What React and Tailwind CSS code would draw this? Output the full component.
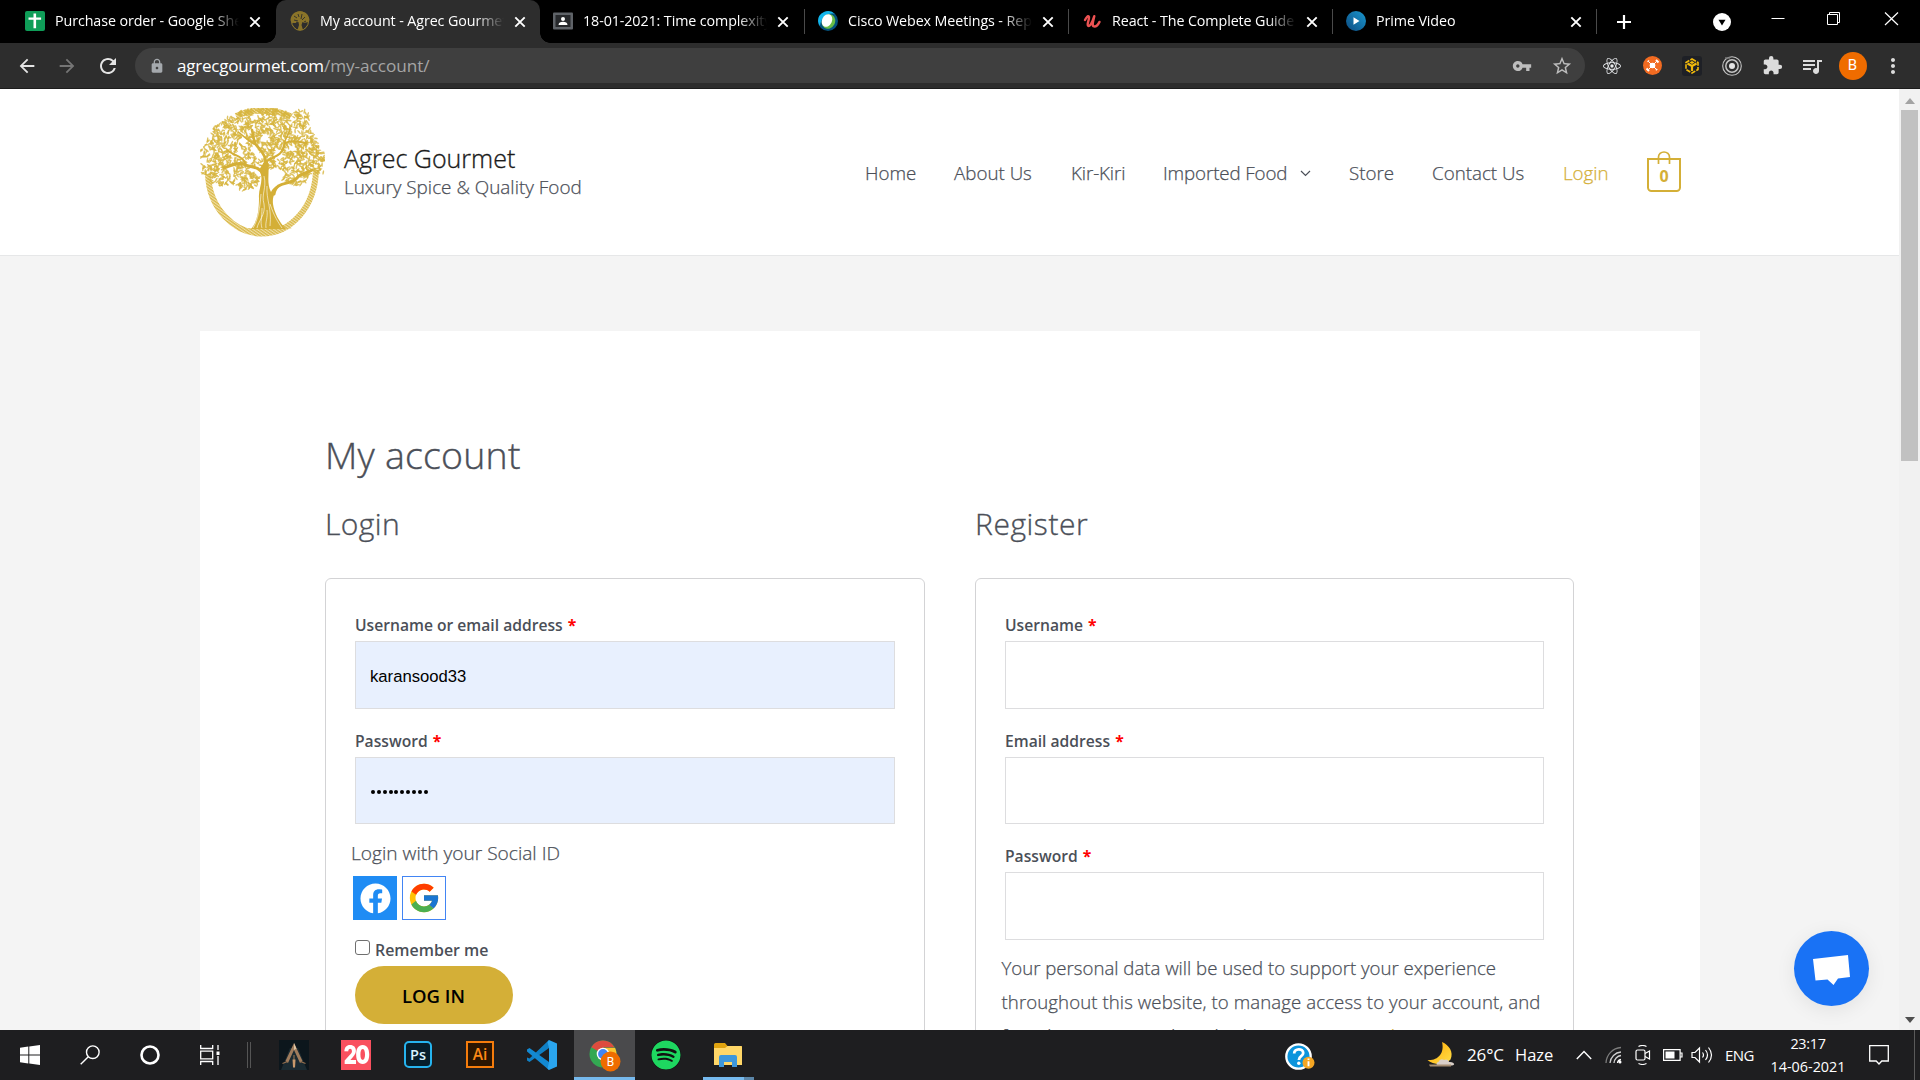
import {
  MdVpnKey, MdStarBorder, MdExtension, MdQueueMusic, MdLock, MdRefresh,
  MdArrowBack, MdArrowForward, MdMoreVert,
} from "react-icons/md";
import { FaSpotify, FaFacebook } from "react-icons/fa";
import { FcGoogle } from "react-icons/fc";
import { SiReact } from "react-icons/si";

/* ---------- Olive tree logo ---------- */

function makeLeaves() {
  let seed = 11;
  const rnd = () => {
    seed = (seed * 16807) % 2147483647;
    return seed / 2147483647;
  };
  const holes = [
    [58, 62, 5], [76, 67, 7], [40, 46, 5], [44, 34, 3.5], [66, 30, 4],
    [78, 46, 5], [54, 42, 4], [92, 40, 3.5], [30, 60, 3], [60, 48, 4],
  ];
  const leaves = [];
  const inside = (x, y) => {
    if (holes.some(([a, b, r]) => Math.hypot(x - a, y - b) < r)) return false;
    const dx = (x - 62) / 58;
    const dy = (y - 46) / 46;
    if (y <= 62 && dx * dx + dy * dy < 1) return true;
    if (y > 42 && y < 66 && (x < 22 || x > 100) && x > 1 && x < 124) return true;
    if (Math.hypot((x - 45) / 14, (y - 70) / 12) < 1) return true;
    if (Math.hypot((x - 23) / 15, (y - 67) / 11) < 1) return true;
    if (Math.hypot((x - 96) / 14, (y - 68) / 9) < 1) return true;
    if (Math.hypot((x - 100) / 9, (y - 11) / 10) < 1) return true;
    return false;
  };
  for (let i = 0; i < 1900; i++) {
    const x = rnd() * 123 + 1;
    const y = rnd() * 82 + 1;
    const a = rnd() * 180;
    const l = 1.7 + rnd() * 1.3;
    if (inside(x, y)) leaves.push([x, y, a, l]);
  }
  return leaves;
}
const LEAVES = makeLeaves();

function TreeLogo() {
  return (
    <svg viewBox="0 0 125 129" className="h-[129px] w-[125px] shrink-0">
      <defs>
        <pattern id="hatch" width="2.4" height="2.4" patternUnits="userSpaceOnUse" patternTransform="rotate(35)">
          <rect width="2.4" height="2.4" fill="#f0dfa6" />
          <rect width="2.4" height="1.3" fill="#d9b848" />
        </pattern>
      </defs>
      <path d="M8 66 C9 100 34 125.500 62 125.500 C90 125.500 115 100 116 62" fill="none" stroke="url(#hatch)" strokeWidth="6" />
      <path d="M36 8 C52 0.500 74 0.500 90 8" fill="none" stroke="url(#hatch)" strokeWidth="6" />
      <path d="M40 119 Q62 123 86 119 L92 120 Q62 130 34 120 Z" fill="url(#hatch)" />
      {LEAVES.map(([x, y, a, l], i) => (
        <ellipse key={i} cx={x} cy={y} rx={l} ry="0.8" fill="#d7b53f" opacity="0.8" transform={`rotate(${a} ${x} ${y})`} />
      ))}
      <g fill="none" stroke="#d4af37" strokeLinecap="round">
        <path d="M63 66 C58 57 50 60 43 56 C36 54 30 58 24 60" strokeWidth="3" />
        <path d="M46 57 C44 48 34 48 27 42" strokeWidth="2" />
        <path d="M66 62 C68 48 60 42 57 38 C53 34 54 28 52 22" strokeWidth="2.600" />
        <path d="M67 53 C74 48 82 48 84 38 C84 33 94 32 106 35" strokeWidth="2.200" />
        <path d="M84 38 C84 30 91 26 90 18" strokeWidth="1.500" />
        <path d="M74 86 C76 72 90 78 97 70 C100 65 106 66 112 62" strokeWidth="3" />
        <path d="M56 37 C46 32 42 26 38 24" strokeWidth="1.500" />
      </g>
      <path d="M59 62 C65 72 58 80 59 90 C59 104 57 114 51 121 L86 121 C79 114 74 104 73 96 C72 88 76 82 80 77 C74 78 72 82 71 84 C66 74 70 64 68 54 L64 54 Z" fill="#d4af37" />
      <g fill="none" stroke="#fff" strokeOpacity="0.65" strokeWidth="0.900">
        <path d="M64 68 C67 80 61 86 64 96 C66 106 58 114 57 120" />
        <path d="M67 78 C66 92 72 100 70 118" />
        <path d="M62 100 C62 110 60 114 62 120" />
        <path d="M70 96 C74 108 78 114 82 120" />
        <path d="M61 86 C60 100 58 112 53 120" />
        <path d="M67 102 C68 110 65 114 66 120" />
      </g>
    </svg>
  );
}

/* ---------- Browser chrome ---------- */

function SheetsIcon() {
  return (
    <svg viewBox="0 0 20 20" className="size-5">
      <rect width="20" height="20" rx="2" fill="#0f9d58" />
      <path d="M8.500 2.500h2.600v4h5v2.300h-5v8.500H8.500V8.800H3.500V6.500h5z" fill="#fff" />
    </svg>
  );
}
function TreeFavicon() {
  return (
    <svg viewBox="0 0 20 20" className="size-5">
      <ellipse cx="10" cy="10" rx="8.500" ry="9.300" fill="none" stroke="#97802c" strokeWidth="1" />
      <path d="M0.500 9C1 3 5 0.500 10 0.500S19 3 19.500 9c-1 3-3 2-5 3l-2-1-1 3 1.500 5H7.500L9 14l-.5-3-3 1C3 12 1 12 .5 9z" fill="#8a7429" />
      <path d="M4 5l3 2M12 3l-1 5M15 6l-3 3M4 9l4 1M8 3l1 3M16 10l-2 1M6 11l2 1" stroke="#2d2d2d" strokeWidth=".9" />
    </svg>
  );
}
function ClassroomIcon() {
  return (
    <svg viewBox="0 0 20 20" className="size-5">
      <rect width="20" height="17" y="1.500" rx="1" fill="#5f6368" />
      <rect x="2.500" y="4" width="15" height="12" fill="#26282b" />
      <circle cx="10" cy="8" r="2" fill="#fff" />
      <path d="M5.500 14c0-2.200 2-3.300 4.500-3.300s4.500 1.100 4.500 3.300z" fill="#fff" />
    </svg>
  );
}
function WebexIcon() {
  return (
    <svg viewBox="0 0 20 20" className="size-5">
      <circle cx="10" cy="10" r="10" fill="#04517c" />
      <path d="M0 10A10 10 0 0 1 17 3C10 1 3 6 2 15A10 10 0 0 1 0 10z" fill="#12b5ea" />
      <ellipse cx="10.500" cy="10.500" rx="6.500" ry="7.500" fill="#69bd45" transform="rotate(30 10.500 10.500)" />
      <ellipse cx="9" cy="9.500" rx="5" ry="6.600" fill="#fff" transform="rotate(25 9 9.500)" />
    </svg>
  );
}
function UdemyIcon() {
  return (
    <svg viewBox="0 0 20 20" className="size-5">
      <path d="M3 9C4.500 6 6 4.500 6.800 5.500c1.300 1.500-2.300 7.500-.8 9.200 1.700 1.500 4.300-3 6.300-9.500-1.300 5.500-2.600 9.800-.3 10.200 2 .3 4-1.500 5.500-4.500" fill="none" stroke="#ec5252" strokeWidth="2.400" strokeLinecap="round" strokeLinejoin="round" />
    </svg>
  );
}
function PrimeIcon() {
  return (
    <svg viewBox="0 0 20 20" className="size-5">
      <defs>
        <linearGradient id="prime" x1="1" y1="0" x2="0" y2="1">
          <stop offset="0" stopColor="#1a98cf" />
          <stop offset="1" stopColor="#0c4a80" />
        </linearGradient>
      </defs>
      <circle cx="10" cy="10" r="10" fill="url(#prime)" />
      <path d="M7.500 6.300l6 3.700-6 3.700z" fill="#fff" />
    </svg>
  );
}

function CloseX() {
  return (
    <svg viewBox="0 0 12 12" className="size-3 shrink-0">
      <path d="M1.300 1.300l9.400 9.400M10.700 1.300l-9.400 9.400" stroke="#fff" strokeWidth="1.900" />
    </svg>
  );
}

const TABS = [
  { title: "Purchase order - Google Sheets", icon: SheetsIcon },
  { title: "My account - Agrec Gourmet", icon: TreeFavicon, active: true },
  { title: "18-01-2021: Time complexity", icon: ClassroomIcon },
  { title: "Cisco Webex Meetings - Report", icon: WebexIcon, line: true },
  { title: "React - The Complete Guide", icon: UdemyIcon, line: true },
  { title: "Prime Video", icon: PrimeIcon, line: true },
];

function Tab({ title, icon: Icon, active, line }) {
  return (
    <div
      className={
        "relative flex h-[43px] w-[264px] shrink-0 items-center " +
        (active ? "rounded-t-[10px] bg-[#2d2d2d] pl-[14px]" : line ? "pl-[14px]" : "pl-[13px]") +
        (line ? " before:absolute before:left-0 before:top-[9px] before:h-[25px] before:w-px before:bg-[#4a4a4a]" : "")
      }
    >
      {active && (
        <>
          <span className="absolute bottom-0 -left-[10px] size-[10px] bg-[radial-gradient(circle_at_0_0,transparent_9.500px,#2d2d2d_10px)]" />
          <span className="absolute bottom-0 -right-[10px] size-[10px] bg-[radial-gradient(circle_at_100%_0,transparent_9.500px,#2d2d2d_10px)]" />
        </>
      )}
      <span className="mb-px shrink-0"><Icon /></span>
      <span className="ml-[10px] w-[185px] overflow-hidden whitespace-nowrap pb-[2px] text-[14.300px] tracking-[-0.100px] text-white [mask-image:linear-gradient(90deg,#000_155px,transparent_184px)]">
        {title}
      </span>
      <span className="ml-[9px] flex"><CloseX /></span>
    </div>
  );
}

function TabStrip() {
  return (
    <div className="flex h-[43px] bg-black pl-[12px]">
      {TABS.map((t) => <Tab key={t.title} {...t} />)}
      <div className="flex h-[43px] w-[55px] items-center justify-center before:mr-auto before:h-[25px] before:w-px before:bg-[#4a4a4a]">
        <svg viewBox="0 0 16 16" className="mr-auto size-4"><path d="M8 1v14M1 8h14" stroke="#fff" strokeWidth="2.200" /></svg>
      </div>
      <div className="ml-[62px] flex h-[43px] items-center">
        <svg viewBox="0 0 18 18" className="size-[18px]"><circle cx="9" cy="9" r="9" fill="#fff" /><path d="M5.500 6.700h7L9 12.500z" fill="#000" /></svg>
      </div>
      <svg viewBox="0 0 160 43" className="ml-[29px] h-[43px] w-[160px]" fill="none" stroke="#fff">
        <path d="M11.500 18.500h13" />
        <path d="M67.500 14.500h10v10h-10zM69.500 14.500v-2h10v10h-2" />
        <path d="M125 12.500l13 12.500M138 12.500l-13 12.500" strokeWidth="1.200" />
      </svg>
    </div>
  );
}

function Extensions() {
  return (
    <div className="flex items-center">
      <span className="flex w-[40px] justify-center"><SiReact className="size-[18px] text-[#e8eaed]" /></span>
      <span className="flex w-[40px] justify-center">
        <svg viewBox="0 0 19 19" className="size-[19px]">
          <circle cx="9.500" cy="9.500" r="9.500" fill="#f26b21" />
          <circle cx="9.500" cy="9.500" r="2.800" fill="#fff" />
          <path d="M9.500 9.500L5.500 5.500M9.500 9.500l4-4M9.500 9.500l-4 4M9.500 9.500l4 4" stroke="#fff" strokeWidth="1" />
          <path d="M13 4l2.500 2.500M3.500 12.500l2.500 2.500" stroke="#fff" strokeWidth="2" />
          <path d="M4.500 5.800l1.600-1.300M12.800 14.300l1.500-1.200" stroke="#fff" strokeWidth="1.300" />
        </svg>
      </span>
      <span className="flex w-[40px] justify-center">
        <svg viewBox="0 0 20 20" className="size-5">
          <rect width="20" height="20" rx="3" fill="#1e2026" />
          <path d="M10 3l6 3.500v7L10 17l-6-3.500v-7z" fill="none" stroke="#f0b90b" strokeWidth="1.600" strokeDasharray="4.500 1.200" />
          <path d="M10 10L5.500 7.500M10 10l4.500-2.500M10 10v5" stroke="#f0b90b" strokeWidth="2.200" />
          <path d="M7.500 6.500L10 5l2.500 1.500L10 8z" fill="#f0b90b" />
        </svg>
      </span>
      <span className="flex w-[40px] justify-center">
        <svg viewBox="0 0 20 20" className="size-5" fill="none" stroke="#c4c4c4">
          <circle cx="10" cy="10" r="9.300" strokeWidth="1.100" />
          <circle cx="10" cy="10" r="6.200" strokeWidth="1.500" />
          <circle cx="10" cy="10" r="3" fill="#e4e4e4" stroke="none" />
          <path d="M3 2l5 0" strokeWidth="1.500" stroke="#777" />
        </svg>
      </span>
      <span className="flex w-[40px] justify-center"><MdExtension className="size-[21px] text-[#dcdcdc]" /></span>
      <span className="flex w-[40px] justify-center"><MdQueueMusic className="size-6 text-[#dcdcdc]" /></span>
      <span className="flex w-[41px] justify-center">
        <span className="flex size-7 items-center justify-center rounded-full bg-[#ef6c00] font-[Roboto,sans-serif] text-[15px] text-white">B</span>
      </span>
      <span className="flex w-[39px] justify-center"><MdMoreVert className="size-6 text-[#dcdcdc]" /></span>
    </div>
  );
}

function Toolbar() {
  return (
    <div className="flex h-[46px] items-center border-b border-[#1c1c1c] bg-[#2d2d2d] pl-[16px]">
      <MdArrowBack className="size-[22px] text-[#e4e4e4]" />
      <MdArrowForward className="ml-[18px] size-[22px] text-[#757575]" />
      <MdRefresh className="ml-[18px] size-6 text-[#e4e4e4]" />
      <div className="ml-[15px] flex h-[35px] w-[1450px] items-center rounded-full bg-[#3f3f3f] pl-[14px] pr-[12px]">
        <MdLock className="size-[16px] text-[#a5a9ad]" />
        <span className="ml-[12px] text-[17px] tracking-[-0.200px] text-white">agrecgourmet.com</span>
        <span className="text-[17.200px] tracking-[-0.050px] text-[#a5a5a5]">/my-account/</span>
        <MdVpnKey className="ml-auto size-[20px] text-[#bdbdbd]" />
        <MdStarBorder className="ml-[19px] size-[22px] text-[#bdbdbd]" />
      </div>
      <div className="ml-[7px]"><Extensions /></div>
    </div>
  );
}

/* ---------- Site ---------- */

function SiteHeader() {
  return (
    <header className="flex h-[167px] items-center border-b border-[#e6e7e8] bg-white pl-[200px]">
      <TreeLogo />
      <div className="ml-[19px] w-[300px]">
        <div className="text-[25px] font-light leading-[30px] text-[#1a1a1a] [-webkit-text-stroke:0.350px]">Agrec Gourmet</div>
        <div className="text-[18.900px] font-light leading-[28px] text-[#4b4f58] [-webkit-text-stroke:0.250px]">Luxury Spice &amp; Quality Food</div>
      </div>
      <nav className="ml-[221px] flex items-center gap-[38px] whitespace-nowrap text-[18.750px] font-light leading-[34px] text-[#4b4f58] [-webkit-text-stroke:0.250px]">
        <span className="w-[51px] pt-[2px]">Home</span>
        <span className="w-[79px] pt-[2px]">About Us</span>
        <span className="w-[54px] pt-[2px] tracking-[-0.100px]">Kir-Kiri</span>
        <span className="flex w-[148px] items-center justify-between pt-[2px] tracking-[-0.120px]">
          Imported Food
          <svg viewBox="0 0 11 7" className="h-[7px] w-[11px]"><path d="M1 1l4.500 4.500L10 1" fill="none" stroke="#4b4f58" strokeWidth="1.200" /></svg>
        </span>
        <span className="w-[45px] pt-[2px]">Store</span>
        <span className="w-[93px] pt-[2px]">Contact Us</span>
        <span className="w-[46px] pt-[2px] text-[#d4af37]">Login</span>
        <span className="relative mb-[2px] flex h-[41px] w-[34px] items-end">
          <svg viewBox="0 0 34 41" className="absolute inset-0 h-[41px] w-[34px]" fill="none" stroke="#d4af37" strokeWidth="2">
            <path d="M1 8h32v28.500a3.500 3.500 0 0 1-3.500 3.500h-25A3.500 3.500 0 0 1 1 36.500z" />
            <path d="M11.500 13V6a5.500 5 0 0 1 11 0v7" strokeWidth="1.700" />
          </svg>
          <span className="w-full text-center text-[16px] font-bold leading-[32px] text-[#d4af37] [-webkit-text-stroke:0]">0</span>
        </span>
      </nav>
    </header>
  );
}

function Field({ label, className, children }) {
  return (
    <div className="pb-[19px]">
      <div className="text-[15.650px] font-semibold leading-[26px] text-[#4b4f58]">
        {label} <span className="ml-px font-bold text-[#ff0000]">*</span>
      </div>
      <div className={"mt-[3px] flex items-center border border-[#dddddf] pl-[14px] " + className}>{children}</div>
    </div>
  );
}

function LoginCard() {
  return (
    <section className="w-[600px]">
      <h2 className="text-[30px] font-light leading-[40px] tracking-[0.400px] text-[#4b4f58] [-webkit-text-stroke:0.350px]">Login</h2>
      <div className="mt-[34px] h-[600px] rounded-[6px] border border-[#d3d3d5] px-[29px] pt-[33px]">
        <Field label="Username or email address" className="h-[68px] bg-[#e8f0fe]">
          <span className="pt-[2px] font-['Liberation_Sans',Arial,sans-serif] text-[16.670px] text-black">karansood33</span>
        </Field>
        <Field label="Password" className="h-[67px] bg-[#e8f0fe]">
          <span className="flex gap-[1.850px] pl-px pt-[2px]">
            {Array.from({ length: 10 }, (_, i) => <span key={i} className="size-[4px] rounded-full bg-black" />)}
          </span>
        </Field>
        <div className="-ml-1 -mt-[7px] text-[19.150px] font-light leading-[34px] text-[#4b4f58] [-webkit-text-stroke:0.250px]">Login with your Social ID</div>
        <div className="-ml-[2px] mt-[6px] flex gap-[5px]">
          <span className="flex size-11 items-center justify-center bg-[#1f8cf4]"><FaFacebook className="size-[31px] text-white" /></span>
          <span className="flex size-11 items-center justify-center border border-[#4285f4] bg-white"><FcGoogle className="size-[34px]" /></span>
        </div>
        <div className="mt-[17px] flex h-[26px] gap-[5px]">
          <span className="mt-[3px] size-[15px] rounded-[3px] border border-[#6f6f6f] bg-white" />
          <span className="text-[15.950px] font-semibold leading-[26px] text-[#4b4f58]">Remember me</span>
        </div>
        <button className="mt-[3px] flex h-[58px] w-[158px] items-center justify-center rounded-full bg-[#d4af37] pr-px pt-px text-[18.500px] font-semibold text-black">LOG IN</button>
      </div>
    </section>
  );
}

function RegisterCard() {
  return (
    <section className="w-[599px]">
      <h2 className="text-[30px] font-light leading-[40px] tracking-[0.550px] text-[#4b4f58] [-webkit-text-stroke:0.350px]">Register</h2>
      <div className="mt-[34px] h-[600px] rounded-[6px] border border-[#d3d3d5] px-[29px] pt-[33px]">
        <Field label="Username" className="h-[68px]" />
        <Field label="Email address" className="h-[67px]" />
        <Field label="Password" className="h-[68px]" />
        <p className="-ml-[3.500px] -mt-[8px] whitespace-nowrap text-[18.620px] font-light leading-[34px] text-[#4b4f58] [-webkit-text-stroke:0.250px]">
          Your personal data will be used to support your experience<br />
          <span className="tracking-[0.090px]">throughout this website, to manage access to your account, and</span><br />
          for other purposes described in our <span className="text-[#d4af37]">privacy policy</span>.
        </p>
      </div>
    </section>
  );
}

function Scrollbar() {
  return (
    <div className="flex w-[21px] flex-col items-center bg-[#f1f1f1]">
      <svg viewBox="0 0 10 6" className="mt-[9px] h-[6px] w-[10px]"><path d="M0 6l5-6 5 6z" fill="#a3a3a3" /></svg>
      <div className="mt-[6px] h-[351px] w-[17px] bg-[#c1c1c1]" />
      <svg viewBox="0 0 10 6" className="mb-[7px] mt-auto h-[6px] w-[10px]"><path d="M0 0l5 6 5-6z" fill="#505050" /></svg>
    </div>
  );
}

function Site() {
  return (
    <div className="relative flex h-[941px] overflow-hidden">
      <div className="flex-1 bg-[#f4f4f4]">
        <SiteHeader />
        <main className="ml-[200px] mt-[75px] h-[800px] w-[1500px] bg-white px-[125px] pt-[100px]">
          <h1 className="text-[37.500px] font-light leading-[48px] tracking-[0.200px] text-[#4b4f58] [-webkit-text-stroke:0.400px]">My account</h1>
          <div className="mt-[25px] flex gap-[50px]">
            <LoginCard />
            <RegisterCard />
          </div>
        </main>
      </div>
      <Scrollbar />
      <div className="absolute bottom-[24px] right-[51px] flex size-[75px] items-center justify-center rounded-full bg-[#1972f5] shadow-[0_4px_20px_rgba(0,0,0,0.080)]">
        <svg viewBox="0 0 75 75" className="size-[75px]"><path d="M19 28L54 24l2 22-12 1.500-4.500 6.500-6-5.500-12 1z" fill="#fff" /></svg>
      </div>
    </div>
  );
}

/* ---------- Taskbar ---------- */

function PinnedApps() {
  return (
    <div className="flex h-full">
      <span className="flex h-full w-[60px] items-center justify-center">
        <svg viewBox="0 0 20 20" className="size-5"><path d="M0 2.800l8.300-1.200v8H0zM9.300 1.400L20 0v9.600H9.300zM0 10.600h8.300v7.800L0 17.200zM9.300 10.600H20V20L9.300 18.600z" fill="#fff" /></svg>
      </span>
      <span className="flex h-full w-[60px] items-center justify-center">
        <svg viewBox="0 0 20 20" className="size-5" fill="none" stroke="#fff" strokeWidth="1.400"><circle cx="12.800" cy="7.200" r="6.300" /><path d="M8.300 11.700L.7 19.300" /></svg>
      </span>
      <span className="flex h-full w-[60px] items-center justify-center">
        <svg viewBox="0 0 20 20" className="size-5" fill="none" stroke="#fff" strokeWidth="2.600"><circle cx="10" cy="10" r="8.500" /></svg>
      </span>
      <span className="flex h-full w-[60px] items-center justify-center">
        <svg viewBox="0 0 20 20" className="size-5" fill="none" stroke="#fff" strokeWidth="1.300"><path d="M.7 0v3.500h12V0M.7 20v-3.500h12V20M.7 6.200h12v7.600H.7zM18 0v5M18 11v9" /><path d="M18 6.500v3.500" strokeWidth="3" /></svg>
      </span>
      <span className="flex h-full w-[23px] items-center justify-start gap-[2px] pl-[7px]">
        <i className="h-[26px] w-px bg-[#555]" /><i className="h-[26px] w-px bg-[#555]" />
      </span>
      <span className="flex h-full w-[62px] items-center justify-center">
        <svg viewBox="0 0 30 30" className="size-[30px]">
          <rect width="30" height="30" fill="#0c161c" />
          <path d="M2 30L11 8l8 0 9 22z" fill="#22343c" opacity=".7" />
          <path d="M15 3l8.500 18-2.500 2L15 10 9 23l-2.500-2z" fill="#a07c5c" />
          <path d="M15 3l2.500 5.500L15 10z" fill="#dcc3a2" />
          <path d="M3.500 23.500l5-2M26.500 23.500l-5-2M15 15v9" stroke="#96714f" strokeWidth="1.100" />
          <path d="M13.500 19.500h3l-.5 8h-2z" fill="#c99a6c" />
        </svg>
      </span>
      <span className="flex h-full w-[62px] items-center justify-center">
        <span className="flex size-[30px] items-center justify-center bg-[#f9505f] font-[Inter,sans-serif] text-[23px] font-black tracking-[-1.500px] text-white"><span className="scale-x-[0.880] scale-y-110">20</span></span>
      </span>
      <span className="flex h-full w-[62px] items-center justify-center pb-px">
        <span className="flex h-[27px] w-[28px] items-center justify-center rounded-[5px] border-2 border-[#26b4ef] bg-[#061e2b] text-[14.500px] font-semibold text-[#d9f3ff]">Ps</span>
      </span>
      <span className="flex h-full w-[62px] items-center justify-center pb-px">
        <span className="flex h-[27px] w-[28px] items-center justify-center border-2 border-[#f57c0c] bg-[#2a1502] text-[15.500px] font-semibold text-[#ff8a16]">Ai</span>
      </span>
      <span className="flex h-full w-[62px] items-center justify-center">
        <svg viewBox="0 0 30 30" className="size-[30px]">
          <path d="M22 0L2.500 18.500 0 17.500v3l2.500 1.500L22 8z" fill="#0f7fc4" />
          <path d="M2.500 8L22 22v8L0 11.500v-2z" fill="#1389d2" />
          <path d="M22 0l8 3.500v23L22 30l-1.500-1.500 1.500-6V8l-1.500-6z" fill="#2aa5ee" />
        </svg>
      </span>
      <span className="ml-px flex h-full w-[61px] items-center justify-center border-b-[3px] border-[#76b9ed] bg-[#4a4a4c]">
        <svg viewBox="0 0 32 32" className="mt-[5px] size-8">
          <circle cx="14" cy="14" r="13.500" fill="#33a852" />
          <path d="M14 14L2.300 7.200A13.500 13.500 0 0 1 14 .5a13.500 13.500 0 0 1 11.700 7H14z" fill="#dd4b3e" />
          <path d="M14 8h12.100A13.500 13.500 0 0 1 14 27.500l6-10z" fill="#fbc62f" />
          <circle cx="14" cy="14" r="6.300" fill="#fff" />
          <circle cx="14" cy="14" r="4.900" fill="#4285f4" />
          <circle cx="21.500" cy="21.500" r="10" fill="#ef6c00" />
          <text x="21.500" y="26" textAnchor="middle" fontSize="12" fill="#fff" fontFamily="Roboto, sans-serif">B</text>
        </svg>
      </span>
      <span className="flex h-full w-[62px] items-center justify-center"><FaSpotify className="size-[30px] rounded-full bg-[#111] text-[#1ed760]" /></span>
      <span className="flex h-full w-[57px] flex-col">
        <svg viewBox="0 0 28 24" className="ml-[17px] mt-[13px] h-6 w-7">
          <path d="M0 1.500A1.500 1.500 0 0 1 1.500 0H11l2.500 3H27a1 1 0 0 1 1 1v18H0z" fill="#e0a30f" />
          <path d="M0 5h11l2.500-2H27a1 1 0 0 1 1 1v18H0z" fill="#ffd768" />
          <path d="M5 24V14a2 2 0 0 1 2-2h14a2 2 0 0 1 2 2v10h-5v-5h-8v5z" fill="#3d97dc" />
        </svg>
        <span className="mt-auto flex h-[3px] pl-[6px]"><i className="w-[41px] bg-[#76b9ed]" /><i className="w-[10px] bg-[#5c86a8]" /></span>
      </span>
    </div>
  );
}

function Tray() {
  return (
    <div className="flex h-full items-center whitespace-nowrap text-white">
      <svg viewBox="0 0 30 28" className="mt-[3px] h-7 w-[30px]">
        <circle cx="13.500" cy="13.500" r="12.200" fill="#0c94dc" stroke="#fff" strokeWidth="2.300" />
        <path d="M9.200 10.500c0-5.500 9-5.500 9-.5 0 3.500-4.300 3-4.300 7" fill="none" stroke="#fff" strokeWidth="2.800" />
        <circle cx="13.800" cy="20.300" r="1.700" fill="#fff" />
        <circle cx="23.500" cy="19.700" r="6" fill="#f5a623" />
        <path d="M23.500 18.300v5M23.500 15.600v1.500" stroke="#fff" strokeWidth="1.900" />
      </svg>
      <svg viewBox="0 0 28 26" className="ml-[112px] h-[26px] w-7">
        <defs><linearGradient id="moon" x1="0" y1="0" x2="1" y2="1"><stop offset="0" stopColor="#ffa600" /><stop offset="1" stopColor="#ffe04a" /></linearGradient></defs>
        <path d="M15 0C22 3 27 10 23.500 17.500 18 24 6 23 0.500 18 10 19 18 12 15 0z" fill="url(#moon)" />
        <path d="M11 23.500c-2 0-2-3 .5-3.500 1-3 4-3.500 5.500-2 2.500-1.500 5 .5 5 2 5-.5 7 3 3 3.500z" fill="#d9cfc8" />
        <path d="M2 22.500h22v2H3z" fill="#a58d72" />
      </svg>
      <span className="ml-[12px] w-[48px] text-[17px] tracking-[-0.150px]">26°C</span>
      <span className="w-[61px] text-[16.500px]">Haze</span>
      <svg viewBox="0 0 16 10" className="h-[10px] w-4"><path d="M.8 9L8 1.500 15.200 9" fill="none" stroke="#fff" strokeWidth="1.400" /></svg>
      <svg viewBox="0 0 17 18" className="ml-[13px] h-[18px] w-[17px]" fill="none" strokeWidth="1.300">
        <path d="M1 17A16 16 0 0 1 16 1.500" stroke="#7d7d7d" />
        <path d="M5 17A12 12 0 0 1 16 6M9 17a8 8 0 0 1 7-7.500" stroke="#d0d0d0" />
        <path d="M12.500 17a4 4 0 0 1 3.500-3.500" stroke="#fff" /><circle cx="15" cy="16" r="1.500" fill="#fff" />
      </svg>
      <svg viewBox="0 0 16 20" className="ml-[13px] h-5 w-4" fill="none" stroke="#fff" strokeWidth="1.200">
        <rect x="1" y="5" width="9" height="10" rx="1.500" /><path d="M10 8.500l4.500-2.500v8L10 11.500M3.500 1.500q4-2 8 0M3.500 18.500q4 2 8 0" />
      </svg>
      <svg viewBox="0 0 20 12" className="ml-[12px] h-3 w-5"><path d="M.6.6h16.500v10.800H.6zM17 4h2v4h-2" fill="none" stroke="#fff" strokeWidth="1.200" /><path d="M2.500 2.500h9v7h-9z" fill="#fff" /></svg>
      <svg viewBox="0 0 22 18" className="ml-[8px] h-[18px] w-[22px]" fill="none" stroke="#fff" strokeWidth="1.200">
        <path d="M1 6.500h3l4.500-4.500v14L4 11.500H1z" /><path d="M11.500 6.500q2 2.500 0 5M14.500 4q4 5 0 10M17.500 1.500q6 7.500 0 15" />
      </svg>
      <span className="ml-[12px] w-[35px] text-[15px] tracking-[-0.600px]">ENG</span>
      <span className="flex w-[96px] flex-col items-center text-[14.400px] leading-[23px]"><span className="tracking-[-0.300px]">23:17</span><span>14-06-2021</span></span>
      <svg viewBox="0 0 20 20" className="ml-[13px] h-5 w-5"><path d="M.7.7h18.600v15.300h-6.500L10 19l-2.800-3H.7z" fill="none" stroke="#fff" strokeWidth="1.300" /></svg>
      <i className="ml-[25px] h-full w-px bg-[#5a5a5a]" />
    </div>
  );
}

export default function App() {
  return (
    <div className="h-[1080px] w-[1920px] overflow-hidden bg-black font-['Open_Sans','Noto_Sans',sans-serif]">
      <TabStrip />
      <Toolbar />
      <Site />
      <footer className="flex h-[50px] bg-[#1e1e20]">
        <PinnedApps />
        <div className="ml-auto pr-[5px]"><Tray /></div>
      </footer>
    </div>
  );
}
